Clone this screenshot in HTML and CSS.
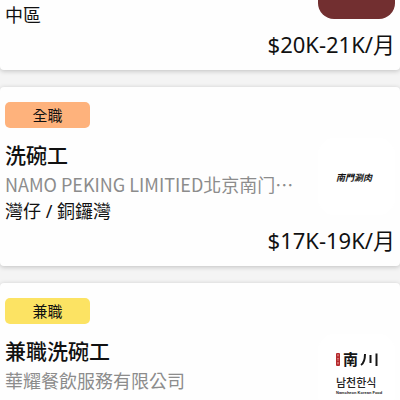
FILE: index.html
```html
<!DOCTYPE html>
<html lang="zh-Hant">
<head>
<meta charset="utf-8">
<meta name="viewport" content="width=device-width, initial-scale=1">
<title>職位列表</title>
<link rel="stylesheet" href="styles.css">
</head>
<body>
<main class="jobs">
  <article class="job job-scrolled">
    <div class="job-main">
      <div class="info">
        <p class="place">中區</p>
      </div>
      <div class="logo logo-maroon"></div>
    </div>
    <p class="pay">$20K-21K/月</p>
  </article>

  <article class="job">
    <span class="tag tag-full">全職</span>
    <div class="job-main">
      <div class="info">
        <h2 class="title">洗碗工</h2>
        <p class="company">NAMO PEKING LIMITIED北京南门…</p>
        <p class="place">灣仔 / 銅鑼灣</p>
      </div>
      <svg class="logo" viewBox="0 0 77 77" role="img" aria-label="南門涮肉">
        <text class="brush" x="18" y="43">南門涮肉</text>
      </svg>
    </div>
    <p class="pay">$17K-19K/月</p>
  </article>

  <article class="job job-last">
    <span class="tag tag-part">兼職</span>
    <div class="job-main">
      <div class="info">
        <h2 class="title">兼職洗碗工</h2>
        <p class="company">華耀餐飲服務有限公司</p>
      </div>
      <svg class="logo" viewBox="0 0 77 77" role="img" aria-label="南川 남천한식">
        <rect x="18" y="19" width="4" height="13" rx="1" fill="#b5282c"/>
        <path d="M19 21h2M20 20.500v2M19 24.500h2M19 26h2M20 28v2.500M19 29h2" stroke="#e9a9a5" stroke-width=".6" fill="none"/>
        <path d="M47 20c0 6-1 9-4 11M52.500 21v8M58.500 19.500V32" fill="none" stroke="#161616" stroke-width="2"/>
        <text class="seal-name" x="25" y="31">南</text>
        <text class="hangul" x="18" y="53">남천한식</text>
        <text class="caption" x="18" y="60">Namcheon Korean Food</text>
      </svg>
    </div>
  </article>
</main>
</body>
</html>
```
FILE: styles.css
```css
* {
  box-sizing: border-box;
}

body {
  margin: 0;
  background: #f4f4f4;
  color: #111;
  font-family: "Noto Sans", "Noto Sans CJK TC", sans-serif;
}

h2,
p {
  margin: 0;
  font-weight: 400;
}

.jobs {
  display: flex;
  flex-direction: column;
  gap: 17px;
  height: 100vh;
  overflow: hidden;
}

.job {
  flex: none;
  padding: 15px 5px 12px;
  background: #fefefe;
  border-radius: 4px;
  box-shadow: 0 1px 5px rgba(0, 0, 0, 0.22);
}

.job-scrolled {
  padding-top: 0;
  border-top-left-radius: 0;
  border-top-right-radius: 0;
}

.job-last {
  flex: 1 0 auto;
}

.tag {
  display: block;
  width: 85px;
  margin-bottom: 10px;
  border-radius: 5px;
  font-size: 15px;
  line-height: 26px;
  text-align: center;
}

.tag-full {
  background: #feb27c;
}

.tag-part {
  background: #fce363;
}

.job-main {
  display: flex;
  align-items: flex-start;
  justify-content: space-between;
  gap: 24px;
}

.info {
  flex: 1;
  min-width: 0;
  padding-top: 2px;
}

.title {
  font-size: 21px;
  font-weight: 500;
  line-height: 30px;
}

.company {
  color: #8c8c8c;
  font-family: "Noto Sans CJK TC", sans-serif;
  font-size: 18px;
  line-height: 28px;
  white-space: nowrap;
}

.place {
  font-size: 18px;
  line-height: 26px;
}

.logo {
  flex: none;
  width: 77px;
  height: 77px;
  border-radius: 16px;
  background: #fff;
}

.logo-maroon {
  height: 19px;
  border-radius: 0 0 16px 16px;
  background: #722f30;
}

.pay {
  margin-top: 2px;
  font-size: 22px;
  line-height: 28px;
  text-align: right;
}

.brush {
  fill: #111;
  font: italic 700 9px "Noto Sans CJK TC", sans-serif;
}

.seal-name {
  fill: #161616;
  font: 700 15px "Noto Sans CJK TC", sans-serif;
}

.hangul {
  fill: #222;
  font: 500 11px "Noto Sans CJK KR", sans-serif;
}

.caption {
  fill: #222;
  font: 700 4px "Liberation Sans", sans-serif;
}
```
